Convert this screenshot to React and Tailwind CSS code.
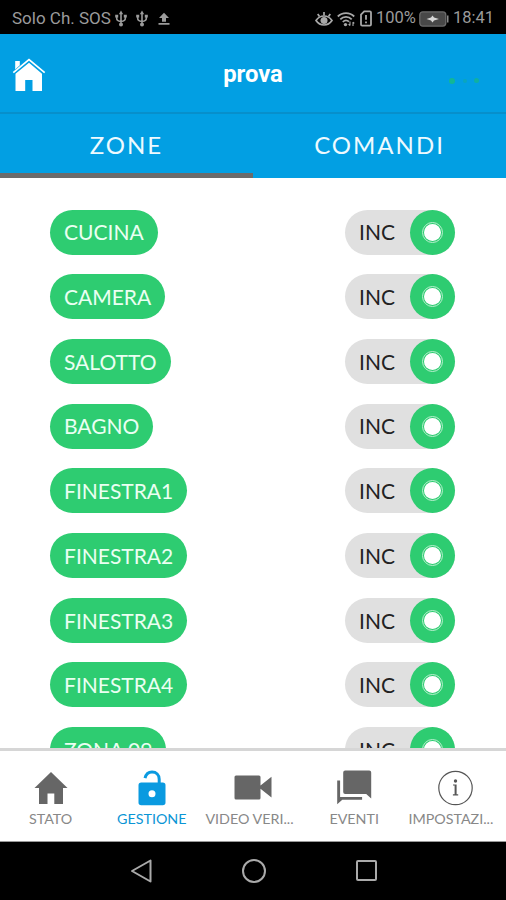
import { useState } from "react";

const zones = ["CUCINA", "CAMERA", "SALOTTO", "BAGNO", "FINESTRA1", "FINESTRA2", "FINESTRA3", "FINESTRA4", "ZONA 09"];

const UsbIcon = () => (
    <svg width="12" height="18" viewBox="0 0 12 18" fill="none" stroke="#9b9b9b" strokeWidth="1.6">
        <path d="M6 3v11M1.700 6v2.500c0 1.800 1.600 2.700 4.300 3M10.300 6v2.500c0 1.800-1.600 2.700-4.300 3" />
        <path d="M6 .5 8.200 4.200H3.800z" fill="#9b9b9b" stroke="none" />
        <path d="M.2 4.800h3v2.800h-3zM8.800 4.800h3v2.800h-3z" fill="#9b9b9b" stroke="none" />
        <circle cx="6" cy="14.500" r="2" fill="#9b9b9b" stroke="none" />
    </svg>
)

const UploadIcon = () => (
    <svg width="12" height="14" viewBox="0 0 12 14" fill="#9b9b9b">
        <path d="M6 .8 11 6H8v3.800H4V6H1zM.5 11h11v1.700H.5z" />
    </svg>
)

const EyeIcon = () => (
    <svg width="18" height="18" viewBox="0 0 18 18" fill="none" stroke="#a8a8a8" strokeWidth="1.700">
        <path d="M1 10.500C3 7.600 5.700 6 9 6s6 1.600 8 4.500c-2 2.900-4.700 4.500-8 4.500s-6-1.600-8-4.500z" />
        <path d="M9 5.500V2M4.500 6.500 2.700 3.900M13.500 6.500l1.800-2.600" />
        <circle cx="9" cy="10.500" r="2.700" fill="#a8a8a8" />
    </svg>
)

const WifiIcon = () => (
    <svg width="18" height="18" viewBox="0 0 18 18" fill="none" stroke="#a8a8a8" strokeWidth="1.800">
        <path d="M.8 6.500C5.300 1.900 12.700 1.900 17.200 6.500M3.300 9.300c3.100-3.200 8.300-3.200 11.400 0M5.800 12c1.800-1.900 4.400-1.900 6.200-.3" />
        <circle cx="8.500" cy="14.600" r="1.700" fill="#a8a8a8" stroke="none" />
        <path d="M13 11.500v4m-1.400-1.400L13 15.600M16 16v-4m1.300 1.400L16 12" strokeWidth="1.100" />
    </svg>
)

const SimIcon = () => (
    <svg width="12" height="17" viewBox="0 0 12 17" fill="none" stroke="#a8a8a8" strokeWidth="1.800">
        <path d="M4.200 1.300h5.600q1.200 0 1.200 1.200v12q0 1.200-1.200 1.200H2.200Q1 15.700 1 14.500v-10z" />
        <path d="M6 5v4.800M6 11.500v1.800" />
    </svg>
)

const BatteryIcon = () => (
    <svg width="30" height="16" viewBox="0 0 30 16">
        <rect x=".8" y=".9" width="26" height="14.200" rx="3" fill="#484848" stroke="#6c6c6c" strokeWidth="1.300" />
        <path d="M28 4.500h1.500v7H28z" fill="#8a8a8a" />
        <path d="M7.500 8 12 6.500 13.500 4.500l1.500 2L20 8l-5 1.500-1.500 2-1.500-2z" fill="#d6d6d6" />
    </svg>
)

const HeaderHome = () => (
    <svg width="34" height="34" viewBox="0 0 34 34" fill="#fff">
        <path d="M3.200 3h4.600v4.300l-4.600 4.200z" />
        <path d="M1.300 14.600 17 1.500l15.700 13.100" fill="none" stroke="#fff" strokeWidth="1.700" />
        <path d="M17 4.800 30 15.800V33H20.500V22h-7.300v11H3.500V15.800z" />
    </svg>
)

const HomeIcon = () => (
    <svg width="36" height="36" viewBox="0 0 36 36" fill="#666">
        <path d="M18 2 34.500 17.900H30V34h-8.700V23.500h-6.800V34H6V17.900H1.500z" />
    </svg>
)

const LockIcon = () => (
    <svg width="36" height="36" viewBox="0 0 36 36">
        <path d="M11 8.200C12 4.200 14.600 2 18 2c4.300 0 7.200 3 7.200 7.300V14" fill="none" stroke="#0a9ae0" strokeWidth="3" />
        <path fillRule="evenodd" d="M7.200 12.500h21.600q2.700 0 2.700 2.700v17.300q0 2.700-2.700 2.700H7.200q-2.700 0-2.700-2.700V15.200q0-2.700 2.700-2.700zM18 20.300a3.500 3.500 0 1 0 0 7 3.500 3.500 0 1 0 0-7z" fill="#0a9ae0" />
    </svg>
)

const VideoIcon = () => (
    <svg width="38" height="36" viewBox="0 0 38 36" fill="#666">
        <path d="M2 5.500h23q1.500 0 1.500 1.500v8.400l11-8.600v20.600l-11-8.600V28q0 1.500-1.500 1.500H2Q.5 29.500.5 28V7q0-1.500 1.500-1.500z" />
    </svg>
)

const EventIcon = () => (
    <svg width="36" height="36" viewBox="0 0 36 36" fill="#666">
        <path d="M9.200.5h24q2 0 2 2v26l-5-4.500h-21q-2 0-2-2V2.500q0-2 2-2z" />
        <path d="M1.200 10.500h2.900v16.500h22v2.700H6.300L1.200 34.200z" />
    </svg>
)

const InfoIcon = () => (
    <svg width="36" height="36" viewBox="0 0 36 36" fill="#555">
        <circle cx="18.500" cy="18" r="16.700" fill="none" stroke="#555" strokeWidth="1.200" />
        <circle cx="18.500" cy="11" r="1.700" />
        <path d="M16 14.500h3.600v9.800h1.600v1.100h-5.300v-1.100h1.700v-8.700H16z" />
    </svg>
)

const navItems = [
    { label: "STATO", icon: <HomeIcon /> },
    { label: "GESTIONE", icon: <LockIcon /> },
    { label: "VIDEO VERI...", icon: <VideoIcon />, shift: "mr-[7px]" },
    { label: "EVENTI", icon: <EventIcon /> },
    { label: "IMPOSTAZI...", icon: <InfoIcon />, shift: "mr-[9px]" },
];

const StatusBar = () => {
    return(
        <div className="h-[34px] shrink-0 bg-black flex items-center justify-between pl-[12px] pr-[12px] pt-[3px] text-[17px] text-[#9b9b9b] font-[Roboto,sans-serif]">
            <div className="flex items-center">
                <span className="w-[103px] whitespace-nowrap">Solo Ch. SOS</span>
                <UsbIcon />
                <span className="w-[9px]"></span>
                <UsbIcon />
                <span className="w-[10px]"></span>
                <UploadIcon />
            </div>
            <div className="flex items-center">
                <EyeIcon />
                <span className="w-[4px]"></span>
                <WifiIcon />
                <span className="w-[5px]"></span>
                <SimIcon />
                <span className="w-[47px] pl-[4px] text-[16.500px] whitespace-nowrap">100%</span>
                <BatteryIcon />
                <span className="w-[45px] pl-[4px] text-[16.500px] whitespace-nowrap">18:41</span>
            </div>
        </div>
    )
}

const ZoneRow = ({name}) => {
    return(
        <div className="h-[64.7px] shrink-0 flex items-center justify-between pl-[50px] pr-[51px]">
            <div className="h-[45px] rounded-full bg-[#2ecc71] pl-[14px] pr-[14px] flex items-center text-[21px] text-[#eafff2]">
                {name}
            </div>
            <div className="h-[45px] w-[110px] rounded-full bg-[#e0e0e0] pl-[14px] flex items-center justify-between">
                <span className="text-[21px] text-[#222]">INC</span>
                <div className="size-[45px] rounded-full bg-[#2ecc71] flex items-center justify-center">
                    <div className="size-[21px] rounded-full border border-[#b9f0cf] flex items-center justify-center">
                        <div className="size-[17px] rounded-full bg-white"></div>
                    </div>
                </div>
            </div>
        </div>
    )
}

const App = () => {

    const [tab,setTab] = useState("zone");
    const [page,setPage] = useState("GESTIONE");

    return(
        <div className="w-[506px] h-[900px] flex flex-col overflow-hidden bg-white font-[Lato,sans-serif]">
            <StatusBar />
            <div className="h-[80px] shrink-0 bg-[#029fe3] border-b-2 border-[#078fcb] grid grid-cols-3 items-center">
                <div className="pl-[12px] pt-[3px]"><HeaderHome /></div>
                <p className="text-center text-[23.800px] leading-none font-bold text-white font-[Roboto,sans-serif] pt-[4px]">prova</p>
                <div className="flex items-center justify-end gap-[7.500px] pr-[27px] pt-[15px]">
                    <span className="size-[6px] rounded-full bg-[#12b795]"></span>
                    <span className="size-[4px] rounded-full bg-[#0ba6bd]"></span>
                    <span className="size-[5px] rounded-full bg-[#10b0a0]"></span>
                </div>
            </div>
            <div className="h-[64px] shrink-0 bg-[#029fe3] flex text-[24px] tracking-[2px] text-[#eefaff]">
                <button className={`flex-1 pt-[2px] border-b-[5px] ${tab == "zone" ? "border-[#6b6b6b]" : "border-transparent"}`} onClick={() => setTab("zone")}>ZONE</button>
                <button className={`flex-1 pt-[2px] border-b-[5px] ${tab == "comandi" ? "border-[#6b6b6b]" : "border-transparent"}`} onClick={() => setTab("comandi")}>COMANDI</button>
            </div>
            <div className="h-[570px] shrink-0 overflow-hidden flex flex-col pt-[21.800px]">
                {zones.map((zone) => {
                    return <ZoneRow key={zone} name={zone} />
                })}
            </div>
            <div className="h-[94px] shrink-0 bg-white border-t-[3px] border-[#d6d6d6] border-b border-b-[#999] grid grid-cols-5">
                {navItems.map((item) => {
                    return(
                        <button key={item.label} className="flex flex-col items-center pt-[18.500px]" onClick={() => setPage(item.label)}>
                            {item.icon}
                            <span className={`mt-[4px] text-[14.300px] leading-[18px] whitespace-nowrap ${item.shift || ""} ${page == item.label ? "text-[#0a95d5]" : "text-[#888]"}`}>{item.label}</span>
                        </button>
                    )
                })}
            </div>
            <div className="h-[58px] shrink-0 bg-black flex items-center justify-center gap-[89px] pl-[2px]">
                <svg width="24" height="24" viewBox="0 0 24 24" fill="none" stroke="#aaa" strokeWidth="2" strokeLinejoin="round">
                    <path d="M3 12 21.500 1.500v21z" />
                </svg>
                <svg width="24" height="24" viewBox="0 0 24 24" fill="none" stroke="#aaa" strokeWidth="2">
                    <circle cx="12" cy="12" r="11" />
                </svg>
                <svg width="24" height="24" viewBox="0 0 24 24" fill="none" stroke="#aaa" strokeWidth="2">
                    <rect x="2" y="2" width="19" height="19" rx="1" />
                </svg>
            </div>
        </div>
    )
}

export default App
